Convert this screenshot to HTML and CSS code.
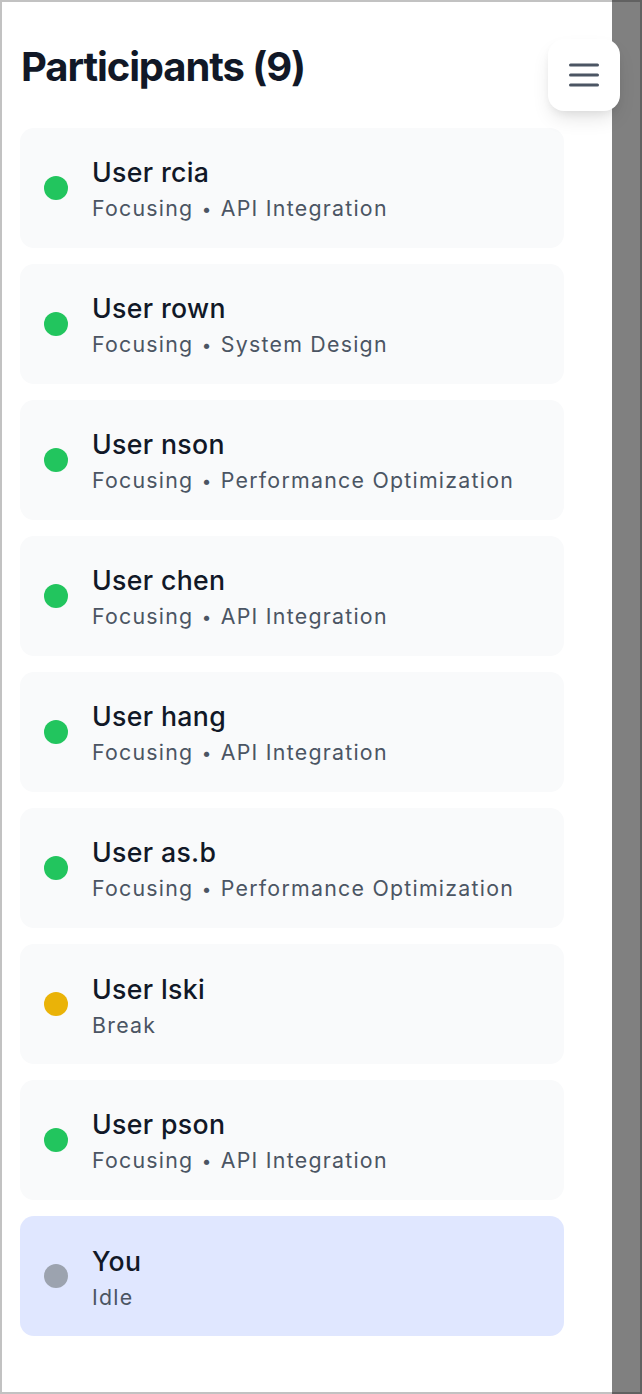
FILE: index.html
```html
<!DOCTYPE html>
<html lang="en">
<head>
<meta charset="utf-8">
<title>Participants</title>
<link rel="stylesheet" href="styles.css">
</head>
<body>
<div class="frame">
  <aside class="panel">
    <h1 class="title">Participants (9)</h1>
    <ul class="list">
      <li class="card"><span class="dot dot-green"></span><div class="info"><div class="name">User rcia</div><div class="status">Focusing <span class="sep">•</span> API Integration</div></div></li>
      <li class="card"><span class="dot dot-green"></span><div class="info"><div class="name">User rown</div><div class="status">Focusing <span class="sep">•</span> System Design</div></div></li>
      <li class="card"><span class="dot dot-green"></span><div class="info"><div class="name">User nson</div><div class="status">Focusing <span class="sep">•</span> Performance Optimization</div></div></li>
      <li class="card"><span class="dot dot-green"></span><div class="info"><div class="name">User chen</div><div class="status">Focusing <span class="sep">•</span> API Integration</div></div></li>
      <li class="card"><span class="dot dot-green"></span><div class="info"><div class="name">User hang</div><div class="status">Focusing <span class="sep">•</span> API Integration</div></div></li>
      <li class="card"><span class="dot dot-green"></span><div class="info"><div class="name">User as.b</div><div class="status">Focusing <span class="sep">•</span> Performance Optimization</div></div></li>
      <li class="card"><span class="dot dot-yellow"></span><div class="info"><div class="name">User lski</div><div class="status">Break</div></div></li>
      <li class="card"><span class="dot dot-green"></span><div class="info"><div class="name">User pson</div><div class="status">Focusing <span class="sep">•</span> API Integration</div></div></li>
      <li class="card card-self"><span class="dot dot-gray"></span><div class="info"><div class="name">You</div><div class="status">Idle</div></div></li>
    </ul>
  </aside>
  <div class="backdrop"></div>
  <button class="menu-btn" aria-label="Menu">
    <svg width="30" height="24" viewBox="0 0 30 24" aria-hidden="true">
      <path d="M1.5 2h27M1.5 12h27M1.5 22h27" stroke="#4b5563" stroke-width="3" stroke-linecap="round" fill="none"/>
    </svg>
  </button>
</div>
</body>
</html>
```

FILE: styles.css
```css
* { box-sizing: border-box; }

html, body {
  margin: 0;
  padding: 0;
  background: #ffffff;
}

body {
  font-family: Inter, "Noto Sans", "Liberation Sans", sans-serif;
  color: #111827;
}

.frame {
  position: relative;
  display: flex;
  width: 642px;
  height: 1394px;
}

.panel {
  width: 612px;
  height: 1394px;
  background: #ffffff;
  border-left: 2px solid #c2c2c2;
  border-top: 2px solid #c2c2c2;
  border-bottom: 2px solid #c2c2c2;
  padding: 41px 0 0 18px;
}

.backdrop {
  flex: 1;
  background: #808080;
  border-top: 2px solid #616161;
  border-right: 2px solid #616161;
  border-bottom: 2px solid #616161;
}

.title {
  margin: 0 0 37px;
  font-size: 40px;
  line-height: 48px;
  font-weight: 700;
  color: #111827;
  letter-spacing: -1.1px;
  padding-left: 1px;
}

.list {
  list-style: none;
  margin: 0;
  padding: 0;
  width: 544px;
  display: flex;
  flex-direction: column;
  gap: 16px;
}

.card {
  display: flex;
  align-items: center;
  gap: 24px;
  height: 120px;
  padding: 24px 24px;
  background: #f9fafb;
  border-radius: 14px;
}

.card-self {
  background: #e0e7ff;
}

.dot {
  flex: none;
  width: 24px;
  height: 24px;
  border-radius: 50%;
}

.dot-green { background: #22c55e; }
.dot-yellow { background: #eab308; }
.dot-gray { background: #9ca3af; }

.info {
  display: flex;
  flex-direction: column;
  padding-top: 1px;
}

.name {
  font-size: 26.67px;
  line-height: 40px;
  font-weight: 500;
  color: #111827;
  letter-spacing: 0.35px;
}

.status {
  font-size: 21.33px;
  line-height: 32px;
  font-weight: 400;
  color: #4b5563;
  letter-spacing: 1.25px;
}

.sep {
  font-size: 0.8em;
  vertical-align: 0.08em;
  margin: 0 1px;
}

.menu-btn {
  position: absolute;
  left: 548px;
  top: 39px;
  width: 72px;
  height: 72px;
  border: none;
  border-radius: 16px;
  background: #ffffff;
  box-shadow: 0 10px 20px -4px rgba(0, 0, 0, 0.12), 0 4px 8px -2px rgba(0, 0, 0, 0.06);
  display: flex;
  align-items: center;
  justify-content: center;
  padding: 0;
}
```
